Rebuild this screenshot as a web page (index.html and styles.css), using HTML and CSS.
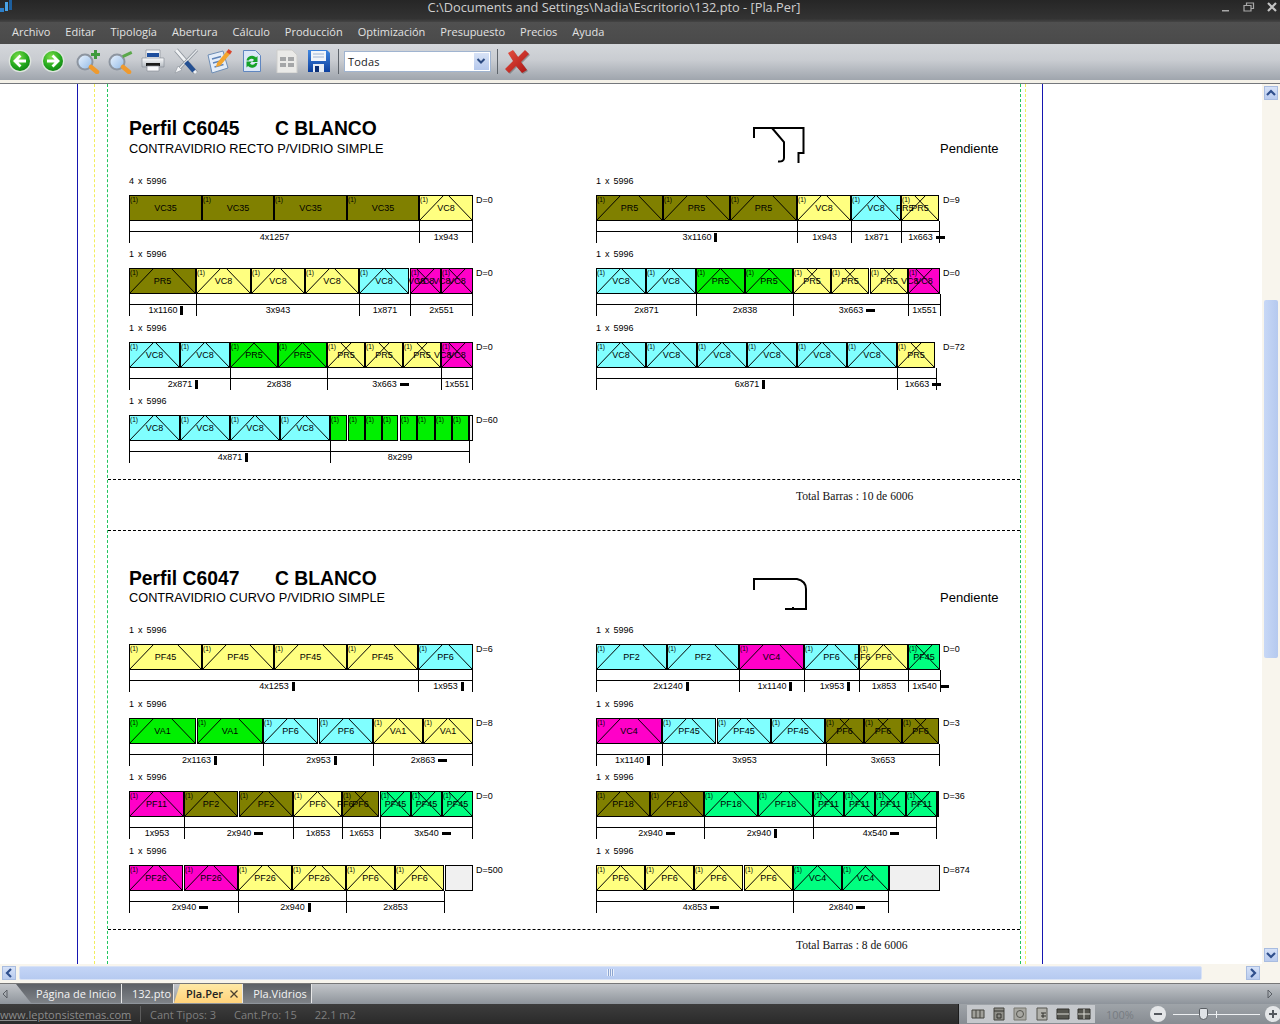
FILE: index.html
```html
<!DOCTYPE html>
<html lang="es">
<head>
<meta charset="utf-8">
<title>132.pto - [Pla.Per]</title>
<link rel="stylesheet" href="styles.css">
<script src="app.js" defer></script>
</head>
<body>
<svg class="defs" aria-hidden="true">
  <defs>
    <radialGradient id="gGreen" cx=".4" cy=".3" r=".8"><stop offset="0" stop-color="#7fe04a"/><stop offset=".6" stop-color="#22a81c"/><stop offset="1" stop-color="#0d7a12"/></radialGradient>
    <linearGradient id="gLens" x1="0" y1="0" x2="1" y2="1"><stop offset="0" stop-color="#eef6ff"/><stop offset="1" stop-color="#8fb8e6"/></linearGradient>
    <linearGradient id="gBlue" x1="0" y1="0" x2="0" y2="1"><stop offset="0" stop-color="#3f86e0"/><stop offset="1" stop-color="#0c3f9e"/></linearGradient>
    <linearGradient id="gRed" x1="0" y1="0" x2="1" y2="1"><stop offset="0" stop-color="#e8503f"/><stop offset="1" stop-color="#a81414"/></linearGradient>
    <linearGradient id="gBody" x1="0" y1="0" x2="0" y2="1"><stop offset="0" stop-color="#fbfcfd"/><stop offset="1" stop-color="#b4bac1"/></linearGradient>
  </defs>
</svg>

<header class="titlebar">
  <svg class="app-icon" viewBox="0 0 14 14" width="14" height="14"><path d="M0 8h4v4H0z" fill="#2d7fc9"/><path d="M5 2h3v9H5z" fill="#4aa3e6"/><path d="M9 0h3v10H9z" fill="#1d5f9e"/></svg>
  <span class="title-text">C:\Documents and Settings\Nadia\Escritorio\132.pto - [Pla.Per]</span>
  <div class="win-btns">
    <svg viewBox="0 0 12 12" width="12" height="12"><path d="M2 9h7v1.5H2z" fill="#a8a8a8"/></svg>
    <svg viewBox="0 0 12 12" width="12" height="12"><path d="M1 4.500h7v5.500H1zM3.500 4.500V2H10.500V7.500H8" fill="none" stroke="#a8a8a8" stroke-width="1.200"/></svg>
    <svg viewBox="0 0 12 12" width="12" height="12"><path d="M2 2l8 8M10 2l-8 8" stroke="#c4c4c4" stroke-width="2.200"/></svg>
  </div>
</header>

<nav class="menubar">
  <span>Archivo</span><span>Editar</span><span>Tipología</span><span>Abertura</span><span>Cálculo</span><span>Producción</span><span>Optimización</span><span>Presupuesto</span><span>Precios</span><span>Ayuda</span>
</nav>

<div class="toolbar">
  <span class="tool"><svg viewBox="0 0 24 24" width="24" height="24"><circle cx="12" cy="12" r="11.300" fill="#dfe6df"/><circle cx="12" cy="12" r="10" fill="url(#gGreen)"/><path d="M12.500 6.500L7 12l5.500 5.500M7.500 12H18" fill="none" stroke="#fff" stroke-width="2.800"/></svg></span>
  <span class="tool"><svg viewBox="0 0 24 24" width="24" height="24"><circle cx="12" cy="12" r="11.300" fill="#dfe6df"/><circle cx="12" cy="12" r="10" fill="url(#gGreen)"/><path d="M11.500 6.500L17 12l-5.500 5.500M16.500 12H6" fill="none" stroke="#fff" stroke-width="2.800"/></svg></span>
  <span class="tool tool-r"><svg viewBox="0 0 26 26" width="26" height="26"><circle cx="10" cy="14" r="7.500" fill="url(#gLens)" stroke="#8d95a0" stroke-width="2"/><path d="M16 19l6 5" stroke="#ef9a2e" stroke-width="4.500" stroke-linecap="round"/><path d="M16 5h3V2h3v3h3v3h-3v3h-3V8h-3z" fill="#3e9a3c"/></svg></span>
  <span class="tool"><svg viewBox="0 0 26 26" width="26" height="26"><circle cx="10" cy="14" r="7.500" fill="url(#gLens)" stroke="#8d95a0" stroke-width="2"/><path d="M16 19l6 5" stroke="#ef9a2e" stroke-width="4.500" stroke-linecap="round"/><path d="M15 5h10v3H15z" fill="#5aa84a" transform="rotate(-25 20 6)"/></svg></span>
  <span class="tool"><svg viewBox="0 0 24 24" width="24" height="24"><path d="M5 1h14v9H5z" fill="#f4f6f9" stroke="#8a9098" stroke-width=".7"/><path d="M6 4h12v4H6z" fill="#1f4f9e"/><path d="M1 9h22v9H1z" fill="url(#gBody)" stroke="#8a9098" stroke-width=".7"/><path d="M5 14h14v3H5z" fill="#1a1a1a"/><path d="M6 17h12v5H6z" fill="#f7f8fa" stroke="#8a9098" stroke-width=".7"/></svg></span>
  <span class="tool"><svg viewBox="0 0 26 26" width="26" height="26"><path d="M3 2l20 23" stroke="#8d949c" stroke-width="4.500"/><path d="M3 2l20 23" stroke="#f0f2f4" stroke-width="2.800"/><path d="M24 2L5 22" stroke="#8d949c" stroke-width="3"/><path d="M24 2L5 22" stroke="#e6e9ec" stroke-width="1.400"/><path d="M13 14l8 9" stroke="#234f92" stroke-width="4.500"/><path d="M2 25l3-7 4 4z" fill="#f4f5f7" stroke="#8d949c" stroke-width=".6"/></svg></span>
  <span class="tool"><svg viewBox="0 0 26 26" width="26" height="26"><path d="M2 7l15-4 5 17-16 5z" fill="#e4edf8" stroke="#6d8db5"/><path d="M6 11l9-2.500M7 15l9-2.500M8.500 19l9-2.500" stroke="#5e83b8" stroke-width="1.500"/><path d="M11 15L21 3l3.500 2.500-10 12-4.500 1.500z" fill="#f3a52e"/><path d="M20.500 4l2-3 3.500 2.500-2 3z" fill="#d8452e"/></svg></span>
  <span class="tool"><svg viewBox="0 0 20 24" width="20" height="24"><path d="M1.500 1.500h12l5 5v16h-17z" fill="#dbe7f7" stroke="#5f86c0"/><path d="M4.500 11.500a5.500 5.500 0 0 1 9.500-3l1.500-1.500v6h-5.500l2-2a3 3 0 0 0-5.200 .5z" fill="#15a228"/><path d="M15.500 14a5.500 5.500 0 0 1-9.500 3l-1.500 1.500v-6H10l-2 2a3 3 0 0 0 5.200 -.5z" fill="#15a228"/></svg></span>
  <span class="tool tool-r"><svg viewBox="0 0 24 24" width="24" height="24"><path d="M2 1h15l5 5v18H2z" fill="#eaeae8" stroke="#cdcdcb"/><path d="M5 8h6v4H5zM13 8h6v4h-6zM5 14h6v4H5zM13 14h6v4h-6z" fill="#a4a6a8"/></svg></span>
  <span class="tool"><svg viewBox="0 0 24 24" width="24" height="24"><path d="M1 1h19l3 3v19H1z" fill="url(#gBlue)"/><path d="M4 2h15v10H4z" fill="#f2f5f9"/><path d="M6 5h11M6 8h11" stroke="#9fb4d4"/><path d="M6 15h11v8H6z" fill="#e7edf5"/><path d="M8 17h4v6H8z" fill="#0c2f75"/></svg></span>
  <span class="tool-sep"></span>
  <div class="combo"><span class="combo-text">Todas</span><span class="combo-btn"><svg viewBox="0 0 10 8" width="10" height="8"><path d="M1.500 2L5 5.500 8.500 2" fill="none" stroke="#2c4a80" stroke-width="2"/></svg></span></div>
  <span class="tool-sep"></span>
  <span class="tool tool-x"><svg viewBox="0 0 26 26" width="26" height="26"><path d="M4 5l5-3 5 7 7-7 4 4-8 8 6 8-5 3-6-7-7 7-4-4 8-8z" fill="#6b6b6b" transform="translate(1 1)" opacity=".6"/><path d="M4 5l5-3 5 7 7-7 4 4-8 8 6 8-5 3-6-7-7 7-4-4 8-8z" fill="url(#gRed)"/></svg></span>
</div>
<div class="toolbar-edge"></div>

<main class="work">
  <div class="paper-area">
    <div class="sheet">
      <div class="margin-yellow">
        <div class="margin-green" id="report"></div>
      </div>
    </div>
  </div>
  <aside class="vscroll">
    <span class="sb-btn"><svg viewBox="0 0 10 8" width="10" height="8"><path d="M1 6l4-4 4 4" fill="none" stroke="#2f4f8c" stroke-width="2.200"/></svg></span>
    <span class="vthumb"></span>
    <span class="sb-fill"></span>
    <span class="sb-btn"><svg viewBox="0 0 10 8" width="10" height="8"><path d="M1 2l4 4 4-4" fill="none" stroke="#2f4f8c" stroke-width="2.200"/></svg></span>
  </aside>
</main>

<div class="hscroll">
  <span class="sb-btn"><svg viewBox="0 0 8 10" width="8" height="10"><path d="M6 1L2 5l4 4" fill="none" stroke="#2f4f8c" stroke-width="2.200"/></svg></span>
  <span class="hthumb"><span class="grip"></span></span>
  <span class="sb-fill"></span>
  <span class="sb-btn"><svg viewBox="0 0 8 10" width="8" height="10"><path d="M2 1l4 4-4 4" fill="none" stroke="#2f4f8c" stroke-width="2.200"/></svg></span>
</div>

<div class="tabbar">
  <svg class="tab-arrow" viewBox="0 0 6 10" width="6" height="10"><path d="M5 1L1 5l4 4z" fill="none" stroke="#5a5f65"/></svg>
  <span class="tab tab-first">Página de Inicio</span>
  <span class="tab tab-second">132.pto</span>
  <span class="tab tab-active">Pla.Per<svg viewBox="0 0 10 10" width="10" height="10"><path d="M1.500 1.500l7 7M8.500 1.500l-7 7" stroke="#4a4030" stroke-width="1.300"/></svg></span>
  <span class="tab tab-last">Pla.Vidrios</span>
  <span class="tab-spacer"></span>
  <svg class="tab-arrow tab-arrow-r" viewBox="0 0 6 10" width="6" height="10"><path d="M1 1l4 4-4 4z" fill="none" stroke="#5a5f65"/></svg>
</div>

<footer class="statusbar">
  <a class="status-link">www.leptonsistemas.com</a>
  <span class="status-sep"></span>
  <span class="status-item s-tipos">Cant Tipos: 3</span>
  <span class="status-item s-pro">Cant.Pro: 15</span>
  <span class="status-item">22.1 m2</span>
  <span class="status-right">
    <span class="view-btns">
      <span class="vb"><svg viewBox="0 0 14 14" width="14" height="14"><path d="M1 3h12v8H1z" fill="#a0a09a" stroke="#44443f"/><path d="M5 3v8M9 3v8" stroke="#44443f"/></svg></span>
      <span class="vb"><svg viewBox="0 0 14 14" width="14" height="14"><path d="M2 1h10v12H2z" fill="#8e8e88" stroke="#44443f"/><path d="M2 4h10M5 7h4v4H5z" fill="none" stroke="#33332f"/></svg></span>
      <span class="vb"><svg viewBox="0 0 14 14" width="14" height="14"><path d="M1 1h12v12H1z" fill="#a8a8a2" stroke="#77776f"/><circle cx="7" cy="7" r="3.500" fill="none" stroke="#55554f"/></svg></span>
      <span class="vb"><svg viewBox="0 0 14 14" width="14" height="14"><path d="M2 1h10v12H2z" fill="#b0b0aa" stroke="#55554f"/><path d="M6 6h5M6 9h5M8 6v5" stroke="#33332f"/></svg></span>
      <span class="vb"><svg viewBox="0 0 14 14" width="14" height="14"><path d="M1 2h12v10H1z" fill="#55554f" stroke="#33332f"/><path d="M1 7h12" stroke="#dcdcd6"/></svg></span>
      <span class="vb"><svg viewBox="0 0 14 14" width="14" height="14"><path d="M1 2h12v10H1z" fill="#55554f" stroke="#33332f"/><path d="M1 7h12M7 2v10" stroke="#dcdcd6"/></svg></span>
    </span>
    <span class="zoom-pct">100%</span>
    <span class="zoom-circle"><svg viewBox="0 0 10 10" width="10" height="10"><path d="M1 5h8" stroke="#54585e" stroke-width="2"/></svg></span>
    <span class="zoom-track"><span class="zoom-thumb"></span><span class="zoom-tick"></span></span>
    <span class="zoom-circle"><svg viewBox="0 0 10 10" width="10" height="10"><path d="M1 5h8M5 1v8" stroke="#54585e" stroke-width="2"/></svg></span>
  </span>
</footer>
</body>
</html>
```

FILE: styles.css
```css
* { box-sizing: border-box; }
html, body { margin: 0; height: 100%; }
body {
  width: 1280px; height: 1024px; overflow: hidden;
  display: flex; flex-direction: column;
  font-family: "Open Sans", "Liberation Sans", sans-serif;
  background: #fff;
}
.defs { position: absolute; width: 0; height: 0; }

/* window chrome */
.titlebar {
  height: 22px; flex: none; position: relative;
  background: linear-gradient(#262626, #333 85%, #454545);
  display: flex; justify-content: center;
}
.app-icon { position: absolute; left: 0; top: 0; }
.title-text { color: #cfcfcf; font-size: 12.800px; line-height: 14px; margin-right: 52px; }
.win-btns { position: absolute; right: 2px; top: 1px; display: flex; gap: 11px; }
.menubar {
  height: 22px; flex: none;
  background: linear-gradient(#505050, #4a4a4a);
  display: flex; align-items: center; gap: 15px; padding: 0 0 3px 12px;
  color: #e2e2e2; font-size: 11px;
}
.toolbar {
  height: 36px; flex: none;
  background: linear-gradient(#d4d7db, #c9ccd1 45%, #9fa5ad);
  display: flex; align-items: center; padding: 0 0 2px 3.500px;
}
.toolbar-edge { height: 4px; flex: none; background: #f4f1e8; border-bottom: 1px solid #75787c; }
.tool { width: 33.200px; display: flex; justify-content: center; flex: none; }
.tool-r svg { margin-left: 3px; }
.tool-sep { width: 1px; height: 25px; background: #5f656c; flex: none; margin-left: 2.500px; margin-right: 5px; }
.combo {
  width: 147px; height: 21px; flex: none; margin-right: 1px;
  background: #fff; border: 1px solid #a0b4d0;
  display: flex; align-items: center; justify-content: space-between;
  padding: 0 1px 0 3px;
}
.combo-text { font-size: 11px; color: #222; letter-spacing: .2px; }
.combo-btn {
  width: 15px; height: 17px;
  background: linear-gradient(#d8e3f7, #b5c8ec);
  display: flex; align-items: center; justify-content: center;
}
.combo + .tool-sep { margin-left: 5px; margin-right: 3px; }

.work { height: 880px; flex: none; display: flex; }
.paper-area { flex: 1; background: #fff; overflow: hidden; }
.sheet {
  width: 966px; height: 100%; margin-left: 77px;
  border-left: 1px solid #1616b0; border-right: 1px solid #1616b0;
  padding: 0 16px;
}
.margin-yellow { height: 100%; border-left: 1px dashed #f2ee5c; border-right: 1px dashed #f2ee5c; padding: 0 3px 0 12px; }
.margin-green { height: 100%; border-left: 1px dashed #22c55e; border-right: 1px dashed #22c55e; overflow: hidden; margin-right: 1px; }

/* scrollbars */
.vscroll {
  width: 18px; flex: none; background: #f8f5ed; display: flex; flex-direction: column;
  align-items: center; padding: 2px 0;
}
.sb-btn {
  width: 14px; height: 14px; flex: none;
  background: linear-gradient(#d6e2f8, #b9cbee);
  border: 1px solid #a8bce0;
  display: flex; align-items: center; justify-content: center;
}
.vthumb { width: 14px; height: 358px; margin-top: 200px; background: linear-gradient(90deg, #c8d8f6, #b5c9ef); border-radius: 2px; }
.sb-fill { flex: 1; }
.hscroll {
  height: 20px; flex: none; display: flex; align-items: center;
  background: #f8f5ed; padding: 0 20px 2px 2px;
  border-bottom: 1px solid #777;
}
.hthumb {
  width: 1183px; height: 14px; margin-left: 3px; flex: none;
  background: linear-gradient(#c4d5f6, #b6caf0);
  border: 1px solid #d8e2f6; border-radius: 2px;
  display: flex; align-items: center; justify-content: center;
}
.grip { width: 7px; height: 7px; background: repeating-linear-gradient(90deg, #eaf0fb 0 1px, #8da6d2 1px 2px); }

/* tabs */
.tabbar {
  height: 20px; flex: none; display: flex; align-items: stretch;
  background: linear-gradient(#c2c5c9, #8e949b);
  padding-left: 2px; font-size: 11px;
}
.tab-arrow { align-self: center; flex: none; }
.tab {
  color: #f4f4f4; display: flex; align-items: center; justify-content: center; gap: 6px;
  background: linear-gradient(#5c6066, #7f8388);
  border-right: 1px solid #e8e8e8; flex: none; height: 19px; font-weight: 500;
}
.tab-first { width: 115px; margin-left: -1px; padding-left: 24px; clip-path: polygon(9px 0, 100% 0, 100% 100%, 24px 100%); }
.tab-second { width: 52px; padding-left: 8px; }
.tab-active { width: 69px; background: linear-gradient(#ffe9a6, #ffd27a); color: #222; font-weight: 600; justify-content: flex-start; padding-left: 12px; clip-path: polygon(0 100%, 6px 0, 100% 0, 100% 100%); }
.tab-last { width: 69px; padding-left: 6px; }
.tab-spacer { flex: 1; }
.tab-arrow-r { margin-right: 7px; }

/* status bar */
.statusbar {
  height: 20px; flex: none; display: flex; align-items: center;
  background: linear-gradient(#3d3d3d, #2a2a2a);
  color: #7f7f7f; font-size: 11px;
}
.status-link { color: #8c8c8c; text-decoration: underline; width: 140px; }
.status-sep { width: 1px; height: 16px; background: #5c5c5c; margin-right: 9px; }
.status-item { margin-right: 18px; }
.status-right {
  margin-left: auto; width: 322px; height: 100%;
  background: linear-gradient(#9fa4a9, #878c92);
  display: flex; align-items: center; padding-left: 8px;
  border-left: 1px solid #1c1c1c;
}
.view-btns { display: flex; width: 128px; height: 18px; background: #c5c8cc; align-items: center; justify-content: space-around; flex: none; }
.vb { display: flex; }
.zoom-pct { color: #777c82; margin-left: 11px; width: 30px; flex: none; }
.zoom-circle {
  width: 16px; height: 16px; border-radius: 50%; margin-left: 14px; flex: none;
  background: #e4e6e8; display: flex; align-items: center; justify-content: center;
}
.zoom-track { position: relative; width: 87px; height: 1px; background: #eef0f2; margin-left: 7px; flex: none; }
.zoom-track + .zoom-circle { margin-left: 5px; }
.zoom-thumb { position: absolute; left: 26px; top: -6px; width: 9px; height: 12px; background: #dfe2e6; border: 1px solid #5a5e63; border-radius: 2px 2px 5px 5px; }
.zoom-tick { position: absolute; left: 43px; top: -3px; width: 1px; height: 7px; background: #eef0f2; }

/* report */
.section { padding: 0 0 0 21px; border-bottom: 1px dashed #000; }
.section-a { padding-top: 35px; }
.section-b { padding-top: 37.900px; }
.head { display: flex; align-items: flex-start; height: 55.500px; }
.head-text { width: 623px; flex: none; color: #000; font-family: "Liberation Sans", Arial, sans-serif; }
.perfil { font-size: 19.300px; font-weight: 700; line-height: 20px; white-space: pre; }
.perfil span { display: inline-block; width: 146px; }
.desc { font-size: 12.750px; line-height: 14px; margin-top: 3px; }
.section-b .desc { margin-top: 2px; }
.shape { flex: none; margin-top: 7px; }
.section-b .shape { margin-top: 8px; }
.pend { font-family: "Liberation Sans", Arial, sans-serif; font-size: 13px; line-height: 14px; margin-top: 23px; margin-left: 132px; white-space: nowrap; }
.section-b .pend { margin-top: 22px; }

.stocks { display: grid; grid-template-columns: 467px 1fr; row-gap: 5.600px; padding-bottom: 15.600px; font-family: "Liberation Sans", Arial, sans-serif; font-size: 9px; color: #000; }
.stock { height: 68px; }
.stock-label { height: 12px; line-height: 12px; margin-bottom: 8px; white-space: nowrap; word-spacing: 1.500px; }
.bar-row { display: flex; height: 26px; }
.bar { width: 344px; flex: none; display: flex; position: relative; }
.d-label { margin-left: 3px; line-height: 11px; white-space: nowrap; }
.piece {
  height: 26px; flex: none; position: relative; border: 1px solid #000;
  display: flex; align-items: center; justify-content: center; white-space: nowrap;
}
.piece svg { position: absolute; left: -1px; top: -1px; }
.piece b { font-weight: 400; position: relative; }
.piece i { position: absolute; left: 0; top: 0; font-style: normal; font-size: 6.500px; line-height: 8px; }
.ghost { position: absolute; top: 8px; line-height: 10px; }
.c-o { background: #808000; } .c-y { background: #ffff80; } .c-c { background: #80ffff; }
.c-g { background: #00f000; } .c-m { background: #ff00c8; } .c-s { background: #00ff80; } .c-e { background: #f0f0f0; }
.dims { display: flex; height: 22px; }
.dim { height: 22px; flex: none; padding-top: 10px; border-left: 1px solid #000; }
.dim:last-child { border-right: 1px solid #000; }
.dim-line { height: 12px; border-top: 1px solid #000; text-align: center; line-height: 11px; white-space: nowrap; }
.dim-text { position: relative; }
.mark { position: absolute; left: 100%; background: #000; margin-left: 3px; }
.mark-v { width: 3px; height: 9px; top: 1px; }
.mark-h { width: 9px; height: 3px; top: 4px; }
.total { font-family: "Liberation Serif", "Times New Roman", serif; font-size: 11.600px; line-height: 14px; height: 51px; padding: 10px 0 0 688px; border-bottom: 1px dashed #000; color: #111; }
.total-last { height: auto; padding-top: 9px; border-bottom: 0; }
```

FILE: app.js
```js
// Cutting plans: each stock lists pieces "x0 x1 label colour [ghostX]" and dimensions "x0 x1 text [mark]".
var SECTIONS = [
  {
    cls: 'section-a', name: 'Perfil C6045', finish: 'C BLANCO',
    desc: 'CONTRAVIDRIO RECTO P/VIDRIO SIMPLE', total: 'Total Barras : 10 de 6006',
    shape: '<svg class="shape" width="56" height="38" viewBox="0 0 56 38"><path d="M2 12V2H51.500V27H46.500V37M20 2L32 16V32Q32 36 26 35.500" fill="none" stroke="#000" stroke-width="2"/></svg>',
    stocks: [
      { x: 129, q: '4 x 5996', d: 'D=0', flat: 1,
        p: ['129 202 VC35 o','202 274 VC35 o','274 347 VC35 o','347 419 VC35 o','419 473 VC8 y'],
        m: ['129 419 4x1257','419 473 1x943'] },
      { x: 596, q: '1 x 5996', d: 'D=9',
        p: ['596 663 PR5 o','663 730 PR5 o','730 797 PR5 o','797 851 VC8 y','851 901 VC8 c','901 939 PR5 y 896'],
        m: ['596 797 3x1160 v','797 851 1x943','851 901 1x871','901 940 1x663 h'] },
      { x: 129, q: '1 x 5996', d: 'D=0',
        p: ['129 196 PR5 o','196 251 VC8 y','251 305 VC8 y','305 359 VC8 y','359 409 VC8 c','410 441 VC8 m 408','441 473 VC8 m 433'],
        m: ['129 196 1x1160 v','196 359 3x943','359 410 1x871','410 473 2x551'] },
      { x: 596, q: '1 x 5996', d: 'D=0',
        p: ['596 646 VC8 c','646 696 VC8 c','696 745 PR5 g','745 793 PR5 g','793 831 PR5 y','831 869 PR5 y','870 908 PR5 y','908 940 VC8 m 901'],
        m: ['596 696 2x871','696 793 2x838','793 908 3x663 h','908 941 1x551'] },
      { x: 129, q: '1 x 5996', d: 'D=0',
        p: ['129 180 VC8 c','180 230 VC8 c','230 278 PR5 g','278 327 PR5 g','327 365 PR5 y','365 403 PR5 y','403 441 PR5 y','441 473 VC8 m 434'],
        m: ['129 230 2x871 v','230 327 2x838','327 441 3x663 h','441 473 1x551'] },
      { x: 596, q: '1 x 5996', d: 'D=72',
        p: ['596 646 VC8 c','646 697 VC8 c','697 747 VC8 c','747 797 VC8 c','797 847 VC8 c','847 897 VC8 c','897 935 PR5 y'],
        m: ['596 897 6x871 v','897 937 1x663 h'] },
      { x: 129, q: '1 x 5996', d: 'D=60',
        p: ['129 180 VC8 c','180 230 VC8 c','230 280 VC8 c','280 330 VC8 c','330 347 . g','348 365 . g','365 382 . g','382 398 . g','400 417 . g','417 435 . g','435 452 . g','452 469 . g','469 473 _ e'],
        m: ['129 330 4x871 v','330 470 8x299'] }
    ]
  },
  {
    cls: 'section-b', name: 'Perfil C6047', finish: 'C BLANCO',
    desc: 'CONTRAVIDRIO CURVO P/VIDRIO SIMPLE', total: 'Total Barras : 8 de 6006',
    shape: '<svg class="shape" width="56" height="34" viewBox="0 0 56 34"><path d="M2 13V2H45Q54 4 54 12V32H33M41 32V30" fill="none" stroke="#000" stroke-width="2"/></svg>',
    stocks: [
      { x: 129, q: '1 x 5996', d: 'D=6',
        p: ['129 202 PF45 y','202 274 PF45 y','274 347 PF45 y','347 418 PF45 y','418 473 PF6 c'],
        m: ['129 418 4x1253 v','418 473 1x953 v'] },
      { x: 596, q: '1 x 5996', d: 'D=0',
        p: ['596 667 PF2 c','667 739 PF2 c','739 804 VC4 m','804 859 PF6 c','859 908 PF6 y 854','908 940 PF45 s'],
        m: ['596 739 2x1240 v','739 804 1x1140 v','804 859 1x953 v','859 908 1x853','908 941 1x540 h'] },
      { x: 129, q: '1 x 5996', d: 'D=8',
        p: ['129 196 VA1 g','197 263 VA1 g','263 318 PF6 c','319 373 PF6 c','373 423 VA1 y','423 473 VA1 y'],
        m: ['129 263 2x1163 v','263 373 2x953 v','373 473 2x863 h'] },
      { x: 596, q: '1 x 5996', d: 'D=3',
        p: ['596 662 VC4 m','662 716 PF45 c','717 771 PF45 c','771 825 PF45 c','825 864 PF6 o','864 902 PF6 o','902 939 PF6 o'],
        m: ['596 662 1x1140 v','662 826 3x953','826 940 3x653'] },
      { x: 129, q: '1 x 5996', d: 'D=0',
        p: ['129 184 PF11 m','184 238 PF2 o','239 293 PF2 o','293 342 PF6 y','342 379 PF6 o 337','380 411 PF45 s','411 442 PF45 s','442 473 PF45 s'],
        m: ['129 184 1x953','184 293 2x940 h','293 342 1x853','342 380 1x653','380 473 3x540 h'] },
      { x: 596, q: '1 x 5996', d: 'D=36',
        p: ['596 650 PF18 o','650 704 PF18 o','704 758 PF18 s','758 813 PF18 s','813 844 PF11 s','844 875 PF11 s','875 906 PF11 s','906 937 PF11 s','937 939 _ s'],
        m: ['596 704 2x940 h','704 813 2x940 v','813 937 4x540 h'] },
      { x: 129, q: '1 x 5996', d: 'D=500',
        p: ['129 183 PF26 m','184 238 PF26 m','238 292 PF26 y','292 346 PF26 y','346 395 PF6 y','395 444 PF6 y','445 473 _ e'],
        m: ['129 238 2x940 h','238 346 2x940 v','346 445 2x853'] },
      { x: 596, q: '1 x 5996', d: 'D=874',
        p: ['596 645 PF6 y','645 694 PF6 y','694 743 PF6 y','744 793 PF6 y','793 842 VC4 s','842 889 VC4 s','889 940 _ e'],
        m: ['596 793 4x853 h','793 889 2x840 h'] }
    ]
  }
];

function pieceHtml(spec, origin, prevEnd, flat) {
  var t = spec.split(' '), x0 = +t[0], x1 = +t[1], w = x1 - x0, label = t[2], colour = t[3];
  var gap = x0 - prevEnd;
  var style = 'width:' + w + 'px' + (gap ? ';margin-left:' + gap + 'px' : '');
  var inner = '';
  var blank = label === '_', plain = label === '.';
  if (!blank) inner += '<i>(1)</i>';
  if (!blank && !plain && !(flat && label === 'VC35')) {
    inner += '<svg width="' + w + '" height="26"><path d="M0 26L25 0M' + (w - 25) + ' 0L' + w + ' 26" stroke="#000" fill="none" stroke-width="1"/></svg>';
  }
  if (!blank && !plain) inner += '<b>' + label + '</b>';
  return '<div class="piece c-' + colour + '" style="' + style + '">' + inner + '</div>';
}

function ghostHtml(spec, origin) {
  var t = spec.split(' ');
  if (!t[4]) return '';
  return '<span class="ghost" style="left:' + (+t[4] - origin) + 'px">' + t[2] + '</span>';
}

function dimHtml(spec) {
  var t = spec.split(' ');
  var mark = t[3] ? '<span class="mark mark-' + t[3] + '"></span>' : '';
  return '<div class="dim" style="width:' + (+t[1] - +t[0]) + 'px"><div class="dim-line"><span class="dim-text">' + t[2] + mark + '</span></div></div>';
}

function stockHtml(s) {
  var end = s.x, pieces = '', ghosts = '';
  s.p.forEach(function (spec) {
    pieces += pieceHtml(spec, s.x, end, s.flat);
    ghosts += ghostHtml(spec, s.x);
    end = +spec.split(' ')[1];
  });
  return '<div class="stock"><div class="stock-label">' + s.q + '</div>' +
    '<div class="bar-row"><div class="bar">' + pieces + ghosts + '</div><span class="d-label">' + s.d + '</span></div>' +
    '<div class="dims">' + s.m.map(dimHtml).join('') + '</div></div>';
}

document.getElementById('report').innerHTML = SECTIONS.map(function (sec, i) {
  return '<section class="section ' + sec.cls + '">' +
    '<div class="head"><div class="head-text"><div class="perfil"><span>' + sec.name + '</span>' + sec.finish + '</div>' +
    '<div class="desc">' + sec.desc + '</div></div>' + sec.shape + '<div class="pend">Pendiente</div></div>' +
    '<div class="stocks">' + sec.stocks.map(stockHtml).join('') + '</div></section>' +
    '<div class="total' + (i ? ' total-last' : '') + '">' + sec.total + '</div>';
}).join('');
```
